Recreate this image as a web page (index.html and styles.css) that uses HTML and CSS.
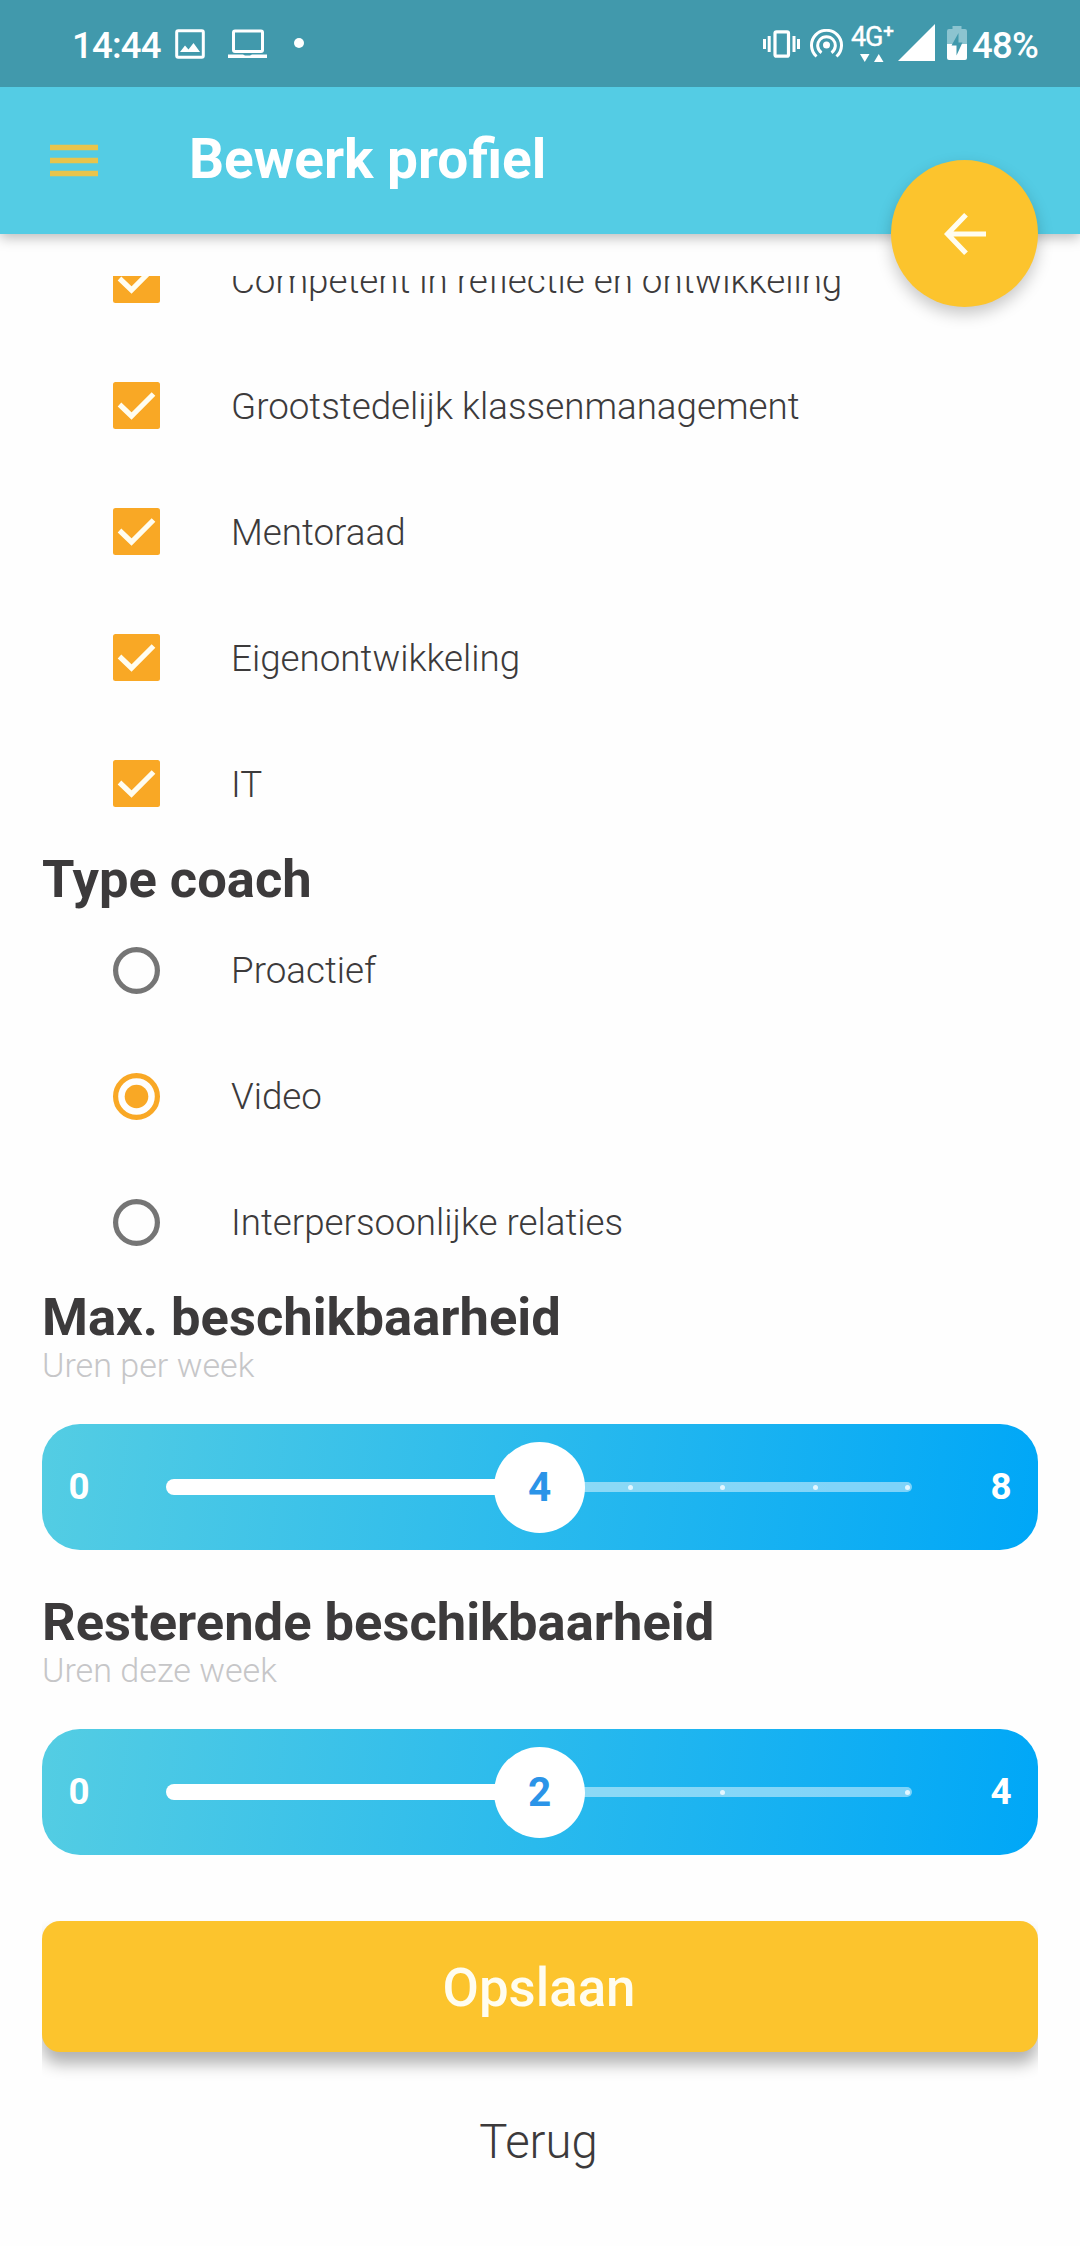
FILE: index.html
```html
<!DOCTYPE html>
<html lang="nl">
<head>
<meta charset="utf-8">
<title>Bewerk profiel</title>
<link rel="stylesheet" href="styles.css">
</head>
<body>
<svg class="defs" aria-hidden="true">
  <symbol id="check" viewBox="0 0 47 47"><rect width="47" height="47" rx="2.5" fill="#f9a825"/><path d="M6.5 22.5L18.500 34L40.500 12" fill="none" stroke="#fffdf0" stroke-width="5.200"/></symbol>
  <symbol id="radio-off" viewBox="0 0 47 47"><circle cx="23.500" cy="23.500" r="20.900" fill="none" stroke="#757575" stroke-width="5.200"/></symbol>
  <symbol id="radio-on" viewBox="0 0 47 47"><circle cx="23.500" cy="23.500" r="20.900" fill="none" stroke="#f9a825" stroke-width="5.200"/><circle cx="23.500" cy="23.500" r="11.800" fill="#f9a825"/></symbol>
</svg>
<div class="screen">
  <div class="statusbar">
    <div class="status-left">
      <span class="status-text">14:44</span>
      <svg class="ic-image" width="30" height="30" viewBox="0 0 30 30"><rect x="1.700" y="1.700" width="26.600" height="26.600" rx="1.500" fill="none" stroke="#fff" stroke-width="3"/><path d="M5 23L10 16.500L13.500 20.500L18.500 14L25 23Z" fill="#fff"/></svg>
      <svg class="ic-laptop" width="39" height="30" viewBox="0 0 39 30"><rect x="5.500" y="2" width="29" height="20.500" rx="1.500" fill="none" stroke="#fff" stroke-width="3"/><path d="M0 25.500H15L17 26.500H22L24 25.500H39V29H0Z" fill="#fff"/></svg>
      <span class="ic-dot"></span>
    </div>
    <div class="status-right">
      <svg class="ic-vibrate" width="37" height="28" viewBox="0 0 37 28"><rect x="12" y="1.800" width="13.500" height="24.400" rx="1.500" fill="none" stroke="#fff" stroke-width="3.200"/><path d="M1.500 9V19M6.200 6V22M31 6V22M35.500 9V19" stroke="#fff" stroke-width="3"/></svg>
      <svg class="ic-hotspot" width="33" height="30" viewBox="0 0 33 30"><circle cx="16.500" cy="16" r="3.500" fill="#fff"/><path d="M11.500 23.700A8.800 8.800 0 1 1 21.500 23.700M6.500 27.500A15 15 0 1 1 26.500 27.500" fill="none" stroke="#fff" stroke-width="3"/></svg>
      <div class="network">
        <span class="network-name">4G<sup class="network-plus">+</sup></span>
        <svg class="network-arrows" width="24" height="8" viewBox="0 0 24 8"><path d="M0 0H9.500L4.750 8ZM14 8H23.500L18.750 0Z" fill="#fff"/></svg>
      </div>
      <svg class="ic-signal" width="37" height="37" viewBox="0 0 37 37"><path d="M0 37H37V0Z" fill="#fff"/></svg>
      <svg class="ic-battery" width="20" height="34" viewBox="0 0 20 34"><path d="M5.500 0H14.500V3H18Q20 3 20 5V18H0V5Q0 3 2 3H5.500Z" fill="#8cc4d0"/><path d="M0 18H20V32Q20 34 18 34H2Q0 34 0 32Z" fill="#fff"/><path d="M11.500 7L4.500 19.500H9.500V29.500L15.500 16.500H11.500Z" fill="#4199ac"/></svg>
      <span class="status-text">48%</span>
    </div>
  </div>

  <header class="appbar">
    <svg class="menu" width="48" height="34" viewBox="0 0 48 34"><path d="M0 3.500H48M0 16.500H48M0 29.500H48" stroke="#e8c44c" stroke-width="5.600"/></svg>
    <h1 class="title">Bewerk profiel</h1>
    <button class="fab" aria-label="Terug"><svg width="42" height="42" viewBox="0 0 42 42"><path d="M42 21H4M22 1.800L3.500 21L22 40.200" fill="none" stroke="#fffdf0" stroke-width="5.200"/></svg></button>
  </header>

  <main class="content">
    <div class="options options-scrolled">
      <label class="option"><svg class="control"><use href="#check"/></svg><span class="option-text">Competent in reflectie en ontwikkeling</span></label>
      <label class="option"><svg class="control"><use href="#check"/></svg><span class="option-text">Grootstedelijk klassenmanagement</span></label>
      <label class="option"><svg class="control"><use href="#check"/></svg><span class="option-text">Mentoraad</span></label>
      <label class="option"><svg class="control"><use href="#check"/></svg><span class="option-text">Eigenontwikkeling</span></label>
      <label class="option"><svg class="control"><use href="#check"/></svg><span class="option-text">IT</span></label>
    </div>

    <h2 class="heading">Type coach</h2>
    <div class="options">
      <label class="option"><svg class="control"><use href="#radio-off"/></svg>Proactief</label>
      <label class="option"><svg class="control"><use href="#radio-on"/></svg>Video</label>
      <label class="option"><svg class="control"><use href="#radio-off"/></svg>Interpersoonlijke relaties</label>
    </div>

    <section class="hours">
      <h2 class="heading">Max. beschikbaarheid</h2>
      <p class="hint">Uren per week</p>
      <div class="slider">
        <span class="bound">0</span>
        <div class="range">
          <div class="track-active"></div>
          <div class="thumb">4</div>
          <div class="track-rest"><i class="tick"></i><i class="tick"></i><i class="tick"></i><i class="tick"></i></div>
        </div>
        <span class="bound">8</span>
      </div>
    </section>

    <section class="hours">
      <h2 class="heading">Resterende beschikbaarheid</h2>
      <p class="hint">Uren deze week</p>
      <div class="slider">
        <span class="bound">0</span>
        <div class="range">
          <div class="track-active"></div>
          <div class="thumb">2</div>
          <div class="track-rest wide-steps"><i class="tick"></i><i class="tick"></i></div>
        </div>
        <span class="bound">4</span>
      </div>
    </section>

    <button class="save">Opslaan</button>
    <button class="back">Terug</button>
  </main>
</div>
</body>
</html>
```
FILE: styles.css
```css
* { box-sizing: border-box; }
body { margin: 0; background: #fefefe; color: #3c3a3b; font-family: Roboto, sans-serif; }
h1, h2, p { margin: 0; }
button { border: 0; padding: 0; font-family: inherit; }
svg { display: block; flex: none; }
.defs { display: none; }
.screen { width: 1080px; height: 2246px; overflow: hidden; display: flex; flex-direction: column; }

.statusbar { height: 87px; flex: none; position: relative; z-index: 2; background: #4199ac; color: #fff; display: flex; justify-content: space-between; padding: 0 42px 0 72px; }
.status-left, .status-right { display: flex; align-items: flex-start; }
.status-text { font-size: 36.500px; font-weight: 500; line-height: 44px; padding-top: 24px; letter-spacing: -.8px; }
.ic-image { margin: 29px 0 0 14px; }
.ic-laptop { margin: 29px 0 0 23px; }
.ic-dot { width: 10px; height: 10px; border-radius: 50%; background: #fff; margin: 38px 0 0 27px; }
.ic-vibrate { margin-top: 30px; }
.ic-hotspot { margin: 29px 0 0 10px; }
.network { width: 43px; margin: 21px 0 0 8px; }
.network-name { display: flex; font-size: 27px; line-height: 32px; letter-spacing: -1.200px; -webkit-text-stroke: .4px #fff; }
.network-plus { font-size: 19px; font-weight: 500; line-height: 20px; margin-left: 1px; }
.network-arrows { margin: 1px 0 0 9px; }
.ic-signal { margin: 24px 0 0 4px; }
.ic-battery { margin: 26px 5px 0 12px; }

.appbar { height: 147px; flex: none; position: relative; z-index: 1; background: #54cce4; box-shadow: 0 4px 12px rgba(0, 0, 0, .26); display: flex; align-items: center; padding-left: 50px; }
.title { margin-left: 91px; color: #fff; font-size: 55px; font-weight: 700; line-height: 64px; padding-bottom: 3px; }
.fab { position: absolute; right: 42px; bottom: -73px; width: 147px; height: 147px; border-radius: 50%; background: #fcc42d; display: flex; align-items: center; justify-content: center; box-shadow: 0 7px 16px rgba(0, 0, 0, .22); }

.content { flex: 1; margin-top: 42px; padding: 0 42px; overflow: hidden; display: flex; flex-direction: column; }
.options-scrolled { margin-top: -59.500px; }
.option { height: 126px; padding-left: 71px; display: flex; align-items: center; gap: 71px; font-size: 36.750px; font-weight: 300; }
.option-text { padding-top: 2px; }
.control { width: 47px; height: 47px; }
.heading { height: 61px; padding-top: 2px; font-size: 52.500px; font-weight: 700; line-height: 61px; }
.hint { font-size: 34.125px; font-weight: 300; line-height: 40px; color: #c6c6c8; }
.hours { height: 305px; flex: none; }
.hours .heading { height: 59px; padding-top: 1px; }

.slider { height: 126px; margin-top: 39px; border-radius: 38px; background: linear-gradient(97.200deg, #54cde3, #00a7f7); display: flex; align-items: center; justify-content: space-between; padding: 0 26px; }
.bound { color: #fff; font-size: 36.750px; font-weight: 700; width: 22px; text-align: center; }
.range { width: 748px; display: flex; align-items: center; padding-top: 1px; }
.track-active { flex: none; width: 330px; height: 16px; border-radius: 8px 0 0 8px; background: #fff; margin-right: -2px; }
.thumb { flex: none; width: 91px; height: 91px; border-radius: 50%; background: #fff; color: #2b94e8; font-size: 40.500px; font-weight: 700; display: flex; align-items: center; justify-content: center; }
.track-rest { flex: none; width: 328px; height: 10px; border-radius: 0 5px 5px 0; background: rgba(255, 255, 255, .47); margin-left: -1px; padding: 0 2px 0 44px; display: flex; align-items: center; justify-content: space-between; }
.wide-steps { padding-left: 136px; }
.tick { width: 5px; height: 5px; border-radius: 50%; background: #e2f6ff; }

.save { flex: none; height: 131px; margin-top: 25px; padding: 4px 2px 0 0; border-radius: 18px; background: #fcc42d; color: #fffdf0; font-size: 52.800px; font-weight: 500; box-shadow: 0 12px 16px rgba(0, 0, 0, .3); clip-path: inset(0 0 -40px); }
.back { flex: none; align-self: center; margin-top: 62px; padding-right: 3px; background: none; color: #3c3a3b; font-size: 47.250px; font-weight: 300; line-height: 56px; }
```
